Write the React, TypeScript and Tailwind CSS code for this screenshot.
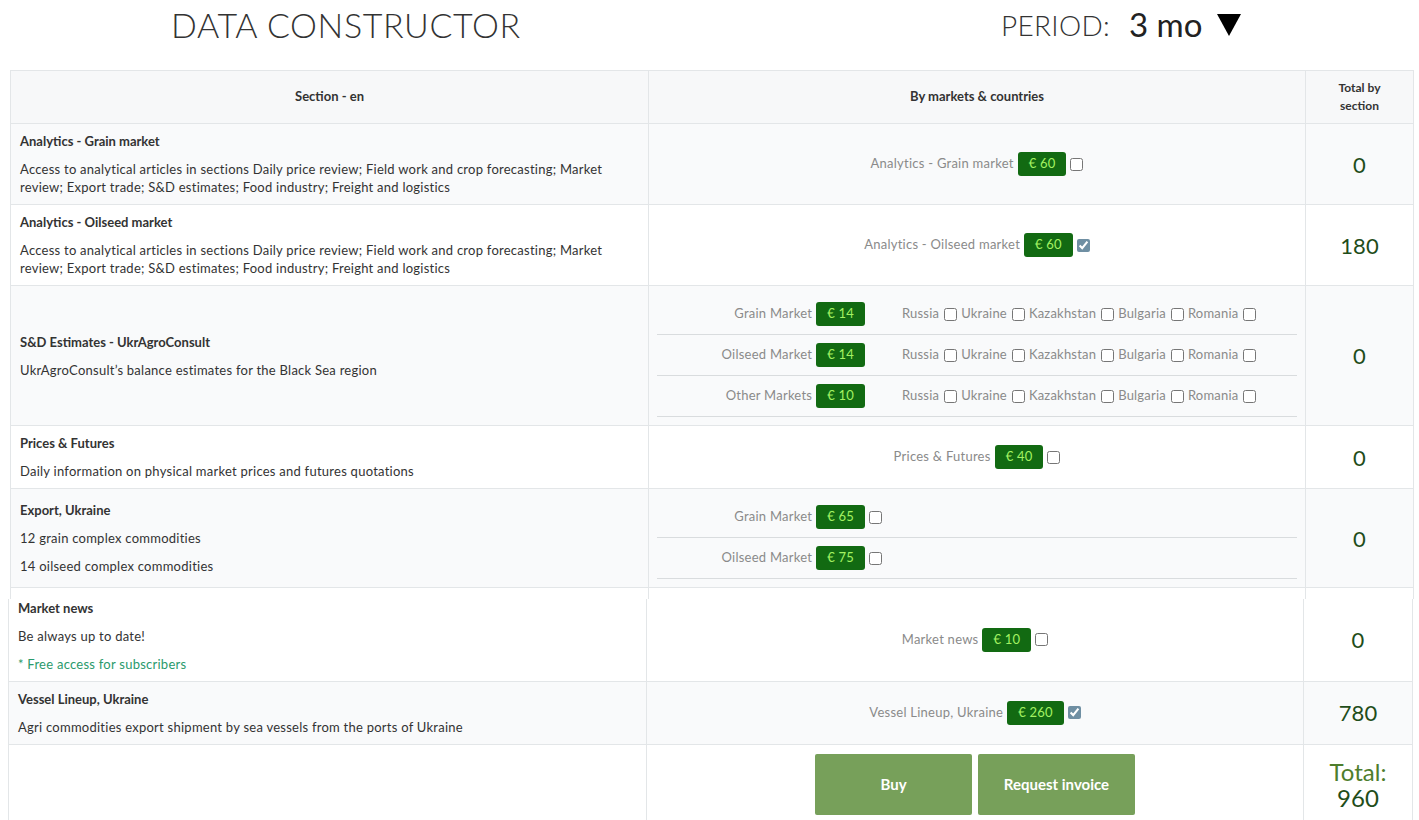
import type { FC, ReactNode } from 'react';

const font = { fontFamily: 'Lato, "Open Sans", sans-serif' };

const countries = ['Russia', 'Ukraine', 'Kazakhstan', 'Bulgaria', 'Romania'];

const Price: FC<{ value: number }> = ({ value }) => (
  <span className="inline-flex h-[24px] items-center rounded-[3px] bg-[#126a12] px-[11px] text-[13px] tracking-[0.2px] text-[#a3f262]">
    € {value}
  </span>
);

const Check: FC<{ checked?: boolean }> = ({ checked }) => (
  <input
    type="checkbox"
    defaultChecked={checked}
    className="m-0 h-[13px] w-[13px] accent-[#6f8fa3]"
  />
);

// single offer: label + price + checkbox, centered
const Offer: FC<{ label: string; price: number; checked?: boolean }> = ({ label, price, checked }) => (
  <div className="flex items-center justify-center gap-[4px]">
    <span className="text-[13px] tracking-[0.25px] text-[#8a8a8a]">{label}</span>
    <Price value={price} />
    <Check checked={checked} />
  </div>
);

// sub row inside S&D and Export cells
const SubRow: FC<{ label: string; price: number; withCountries?: boolean }> = ({ label, price, withCountries }) => (
  <div className="flex h-[41px] items-center border-b border-[#d9dcde]">
    <div className="flex w-[208px] items-center justify-end gap-[4px]">
      <span className="text-[13px] tracking-[0.25px] text-[#8a8a8a]">{label}</span>
      <Price value={price} />
    </div>
    {withCountries ? (
      <div className="flex items-center gap-[4px] pl-[37px] text-[13px] tracking-[0.2px] text-[#8a8a8a]">
        {countries.map((c) => (
          <span key={c} className="flex items-center gap-[5px]">
            {c}
            <Check />
          </span>
        ))}
      </div>
    ) : (
      <div className="flex items-center pl-[4px]">
        <Check />
      </div>
    )}
  </div>
);

const Desc: FC<{ title: string; children: ReactNode }> = ({ title, children }) => (
  <div className="text-[13px] leading-[18px] tracking-[0.25px] text-[#333]">
    <div className="mb-[10px] font-bold tracking-normal">{title}</div>
    {children}
  </div>
);

const Total: FC<{ value: number }> = ({ value }) => (
  <span className="text-[22px] text-[#1f4d1a]">{value}</span>
);

const cell = 'border border-[#e3e6e8] align-middle';

const App: FC = () => {
  return (
    <div className="min-h-[820px] bg-white" style={font}>
      {/* Header */}
      <div className="flex h-[70px] items-start">
        <div className="w-[1001px] pl-[171px] pt-[8px]">
          <h1 className="text-[34px] font-light leading-none tracking-[0.6px] text-[#333]">DATA CONSTRUCTOR</h1>
        </div>
        <div className="flex items-center pt-[8px] text-[#333]">
          <span className="text-[28px] font-light leading-none tracking-[0.3px]">PERIOD:</span>
          <span className="ml-[19px] text-[33px] leading-none text-[#222]">3 mo</span>
          <svg className="ml-[15px] mt-[1px]" width="24" height="22" viewBox="0 0 24 22">
            <polygon points="0,0 24,0 12,22" fill="#000" />
          </svg>
        </div>
      </div>

      {/* Main table */}
      <table className="ml-[10px] w-[1403px] table-fixed border-collapse">
        <colgroup>
          <col className="w-[638px]" />
          <col className="w-[657px]" />
          <col className="w-[108px]" />
        </colgroup>
        <thead>
          <tr className="h-[53px] bg-[#f7f8f9] text-[13px] font-bold text-[#333]">
            <th className={cell}>Section - en</th>
            <th className={cell}>By markets &amp; countries</th>
            <th className={`${cell} text-[12px] leading-[18px]`}>
              Total by
              <br />
              section
            </th>
          </tr>
        </thead>
        <tbody>
          <tr className="h-[81px] bg-[#f9fafb]">
            <td className={`${cell} px-[9px] py-[8px]`}>
              <Desc title="Analytics - Grain market">
                Access to analytical articles in sections Daily price review; Field work and crop forecasting; Market
                review; Export trade; S&amp;D estimates; Food industry; Freight and logistics
              </Desc>
            </td>
            <td className={cell}>
              <Offer label="Analytics - Grain market" price={60} />
            </td>
            <td className={`${cell} text-center`}>
              <Total value={0} />
            </td>
          </tr>
          <tr className="h-[81px] bg-white">
            <td className={`${cell} px-[9px] py-[8px]`}>
              <Desc title="Analytics - Oilseed market">
                Access to analytical articles in sections Daily price review; Field work and crop forecasting; Market
                review; Export trade; S&amp;D estimates; Food industry; Freight and logistics
              </Desc>
            </td>
            <td className={cell}>
              <Offer label="Analytics - Oilseed market" price={60} checked />
            </td>
            <td className={`${cell} text-center`}>
              <Total value={180} />
            </td>
          </tr>
          <tr className="h-[140px] bg-[#f9fafb]">
            <td className={`${cell} px-[9px] py-[8px]`}>
              <Desc title="S&D Estimates - UkrAgroConsult">UkrAgroConsult’s balance estimates for the Black Sea region</Desc>
            </td>
            <td className={`${cell} px-[8px] py-[8px]`}>
              <SubRow label="Grain Market" price={14} withCountries />
              <SubRow label="Oilseed Market" price={14} withCountries />
              <SubRow label="Other Markets" price={10} withCountries />
            </td>
            <td className={`${cell} text-center`}>
              <Total value={0} />
            </td>
          </tr>
          <tr className="h-[63px] bg-white">
            <td className={`${cell} px-[9px] py-[8px]`}>
              <Desc title="Prices & Futures">Daily information on physical market prices and futures quotations</Desc>
            </td>
            <td className={cell}>
              <Offer label="Prices & Futures" price={40} />
            </td>
            <td className={`${cell} text-center`}>
              <Total value={0} />
            </td>
          </tr>
          <tr className="h-[99px] bg-[#f9fafb]">
            <td className={`${cell} px-[9px] py-[8px]`}>
              <Desc title="Export, Ukraine">
                <p className="mb-[10px]">12 grain complex commodities</p>
                <p>14 oilseed complex commodities</p>
              </Desc>
            </td>
            <td className={`${cell} px-[8px] py-[8px]`}>
              <SubRow label="Grain Market" price={65} />
              <SubRow label="Oilseed Market" price={75} />
            </td>
            <td className={`${cell} text-center`}>
              <Total value={0} />
            </td>
          </tr>
          <tr className="h-[11px]">
            <td className="border-x border-[#e3e6e8]" />
            <td className="border-x border-[#e3e6e8]" />
            <td className="border-x border-[#e3e6e8]" />
          </tr>
        </tbody>
      </table>

      {/* Second table */}
      <table className="ml-[8px] w-[1404px] table-fixed border-collapse">
        <colgroup>
          <col className="w-[638px]" />
          <col className="w-[657px]" />
          <col className="w-[109px]" />
        </colgroup>
        <tbody>
          <tr className="h-[82px] bg-white">
            <td className={`${cell} border-t-0 px-[9px] pt-0 pb-[8px] align-top`}>
              <Desc title="Market news">
                <p className="mb-[10px]">Be always up to date!</p>
                <p className="text-[#2a9a6c]">* Free access for subscribers</p>
              </Desc>
            </td>
            <td className={`${cell} border-t-0`}>
              <Offer label="Market news" price={10} />
            </td>
            <td className={`${cell} border-t-0 text-center`}>
              <Total value={0} />
            </td>
          </tr>
          <tr className="h-[63px] bg-[#f9fafb]">
            <td className={`${cell} px-[9px] py-[8px]`}>
              <Desc title="Vessel Lineup, Ukraine">
                Agri commodities export shipment by sea vessels from the ports of Ukraine
              </Desc>
            </td>
            <td className={cell}>
              <Offer label="Vessel Lineup, Ukraine" price={260} checked />
            </td>
            <td className={`${cell} text-center`}>
              <Total value={780} />
            </td>
          </tr>
          <tr className="h-[80px] bg-white">
            <td className={cell} />
            <td className={`${cell} pt-[9px] align-top`}>
              <div className="flex justify-center gap-[6px]">
                <button className="h-[61px] w-[157px] rounded-[2px] bg-[#77a05a] text-[15px] font-bold text-white">
                  Buy
                </button>
                <button className="h-[61px] w-[157px] rounded-[2px] bg-[#77a05a] text-[15px] font-bold text-white">
                  Request invoice
                </button>
              </div>
            </td>
            <td className={`${cell} pt-[14px] text-center align-top`}>
              <p className="text-[24px] leading-[26px] text-[#4e7d2c]">
                Total:
                <br />
                <span className="text-[#1f4d1a]">960</span>
              </p>
            </td>
          </tr>
        </tbody>
      </table>
    </div>
  );
};

export default App;
